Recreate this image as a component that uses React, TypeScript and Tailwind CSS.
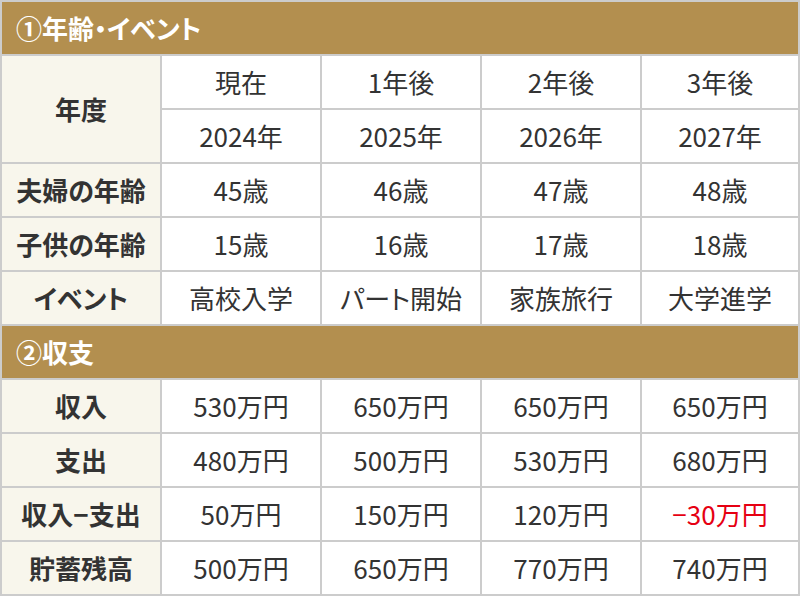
import React from 'react';

const font = { fontFamily: '"Noto Sans CJK JP", "Noto Sans", sans-serif' };

type Row = { label: string; values: string[]; red?: number };

const lifeRows: Row[] = [
  { label: '夫婦の年齢', values: ['45歳', '46歳', '47歳', '48歳'] },
  { label: '子供の年齢', values: ['15歳', '16歳', '17歳', '18歳'] },
  { label: 'イベント', values: ['高校入学', 'パート開始', '家族旅行', '大学進学'] },
];

const moneyRows: Row[] = [
  { label: '収入', values: ['530万円', '650万円', '650万円', '650万円'] },
  { label: '支出', values: ['480万円', '500万円', '530万円', '680万円'] },
  { label: '収入−支出', values: ['50万円', '150万円', '120万円', '−30万円'], red: 3 },
  { label: '貯蓄残高', values: ['500万円', '650万円', '770万円', '740万円'] },
];

const Label = ({ children, tall }: { children: React.ReactNode; tall?: boolean }) => (
  <div
    className={`flex items-center justify-center bg-[#f8f6ec] text-[26px] font-bold text-[#333] ${tall ? 'row-span-2' : ''}`}
  >
    {children}
  </div>
);

const Cell = ({ children, red }: { children: React.ReactNode; red?: boolean }) => (
  <div className={`flex items-center justify-center bg-white text-[26px] ${red ? 'text-[#e60012]' : 'text-[#333]'}`}>
    {children}
  </div>
);

const Heading = ({ children }: { children: React.ReactNode }) => (
  <div className="col-span-5 flex items-center bg-[#b38f4f] pl-[14px] text-[26px] font-bold text-white">
    {children}
  </div>
);

export default function App() {
  const renderRows = (rows: Row[]) =>
    rows.map((r) => (
      <React.Fragment key={r.label}>
        <Label>{r.label}</Label>
        {r.values.map((v, i) => (
          <Cell key={i} red={r.red === i}>
            {v}
          </Cell>
        ))}
      </React.Fragment>
    ));

  return (
    <div
      style={font}
      className="grid h-[596px] w-[800px] grid-cols-[158px_158px_158px_158px_1fr] grid-rows-[repeat(11,52px)] gap-[2px] bg-[#cccccc] p-[2px] leading-none [font-feature-settings:'palt']"
    >
      <Heading>①年齢・イベント</Heading>

      <Label tall>年度</Label>
      {['現在', '1年後', '2年後', '3年後'].map((t) => (
        <Cell key={t}>{t}</Cell>
      ))}
      {['2024年', '2025年', '2026年', '2027年'].map((t) => (
        <Cell key={t}>{t}</Cell>
      ))}

      {renderRows(lifeRows)}

      <Heading>②収支</Heading>

      {renderRows(moneyRows)}
    </div>
  );
}
